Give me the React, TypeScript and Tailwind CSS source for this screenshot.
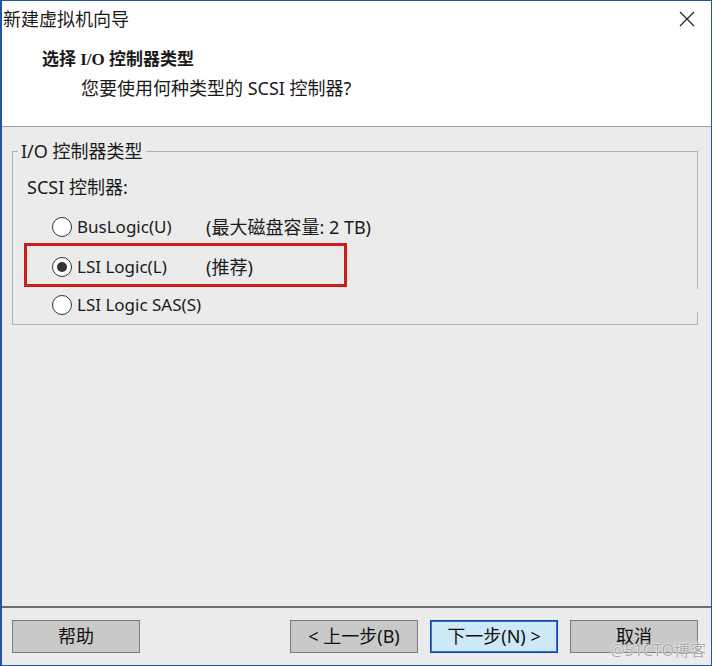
import React from "react";

const sans = "font-['Noto_Sans','Noto_Sans_CJK_SC',sans-serif]";

function Radio({ checked }: { checked?: boolean }) {
  return (
    <span className="w-[20px] h-[20px] rounded-full border border-[#333] bg-white flex items-center justify-center shrink-0">
      {checked && <span className="w-[10px] h-[10px] rounded-full bg-[#333]" />}
    </span>
  );
}

function Option({
  label,
  note,
  checked,
  h,
}: {
  label: string;
  note?: string;
  checked?: boolean;
  h: string;
}) {
  return (
    <div className={`flex items-center pl-[39px] ${h}`}>
      <Radio checked={checked} />
      <span className="ml-[5px] w-[129px] text-[17px] leading-[22px]">{label}</span>
      {note && <span className="text-[18px] leading-[22px]">{note}</span>}
    </div>
  );
}

function Button({ children, primary }: { children: React.ReactNode; primary?: boolean }) {
  return (
    <button
      className={
        primary
          ? "w-[128px] h-[33px] border border-[#0c46a8] shadow-[inset_0_0_0_1px_#3a6dc4] bg-[#cde8f6] text-[18px] text-[#111]"
          : "w-[128px] h-[33px] border border-[#7a7a7a] bg-[#c9c9c9] text-[18px] text-[#111]"
      }
    >
      {children}
    </button>
  );
}

export default function App() {
  return (
    <div
      className={`w-[712px] h-[666px] flex flex-col border border-[#1f56a8] border-l-2 bg-[#ebebeb] text-[#1a1a1a] ${sans}`}
    >
      {/* 標題與說明 */}
      <div className="h-[126px] bg-white border-b border-[#a0a0a0] shrink-0">
        <div className="h-[36px] flex items-center justify-between pl-[1px] pr-[16px]">
          <span className="text-[18px] leading-[22px]">新建虚拟机向导</span>
          <svg width="16" height="16" viewBox="0 0 16 16">
            <path d="M1 1 L15 15 M15 1 L1 15" stroke="#222" strokeWidth="1.2" />
          </svg>
        </div>
        <div className="mt-[11px] pl-[40px] text-[17px] leading-[24px] font-bold font-['Liberation_Serif','Noto_Sans_CJK_SC',serif]">
          选择 I/O 控制器类型
        </div>
        <div className="mt-[4px] pl-[79px] text-[18px] leading-[24px]">
          您要使用何种类型的 SCSI 控制器?
        </div>
      </div>

      {/* 內容 */}
      <div className="flex-1 border-b-2 border-[#6e6e6e]">
        <fieldset className="mt-[14px] ml-[10px] mr-[13px] border border-[#b0b0b0] pb-[1px]">
          <legend className="ml-[5px] px-[3px] text-[18px] leading-[20px]">I/O 控制器类型</legend>
          <div className="mt-[16px] pl-[14px] text-[18px] leading-[20px]">SCSI 控制器:</div>
          <div className="relative mt-[10px]">
            <Option label="BusLogic(U)" note="(最大磁盘容量: 2 TB)" h="h-[40px]" />
            <Option label="LSI Logic(L)" note="(推荐)" checked h="h-[40px]" />
            <Option label="LSI Logic SAS(S)" h="h-[36px]" />
            <div className="absolute left-[11px] top-[36px] w-[323px] h-[44px] border-[3px] border-[#cc1d1d]" />
            <div className="absolute right-[-1px] top-[82px] w-[1px] h-[23px] bg-[#ebebeb]" />
          </div>
        </fieldset>
      </div>

      {/* 按鈕列 */}
      <div className="relative h-[57px] shrink-0 flex items-start pt-[12px] pl-[10px] pr-[13px]">
        <Button>帮助</Button>
        <div className="ml-auto flex gap-[12px]">
          <Button>&lt; 上一步(B)</Button>
          <Button primary>下一步(N) &gt;</Button>
          <Button>取消</Button>
        </div>
        <span className="absolute right-[5px] bottom-[6px] text-[16px] leading-[18px] text-[#a9a9a9] [text-shadow:0_0_2px_#fff,0_0_1px_#fff]">
          @51CTO博客
        </span>
      </div>
    </div>
  );
}
